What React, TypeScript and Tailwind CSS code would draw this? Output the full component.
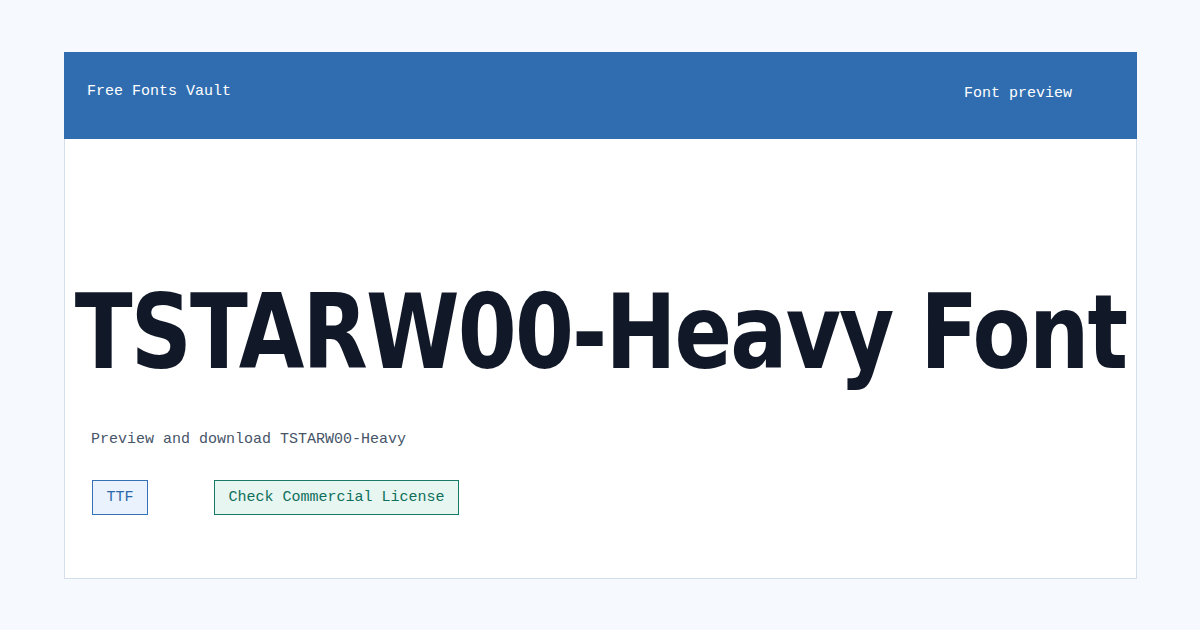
export default function App() {
  const mono = { fontFamily: '"Liberation Mono", "DejaVu Sans Mono", monospace' };
  return (
    <div className="w-[1200px] h-[630px] bg-[#f6f9fd] pt-[52px] pl-[64px] overflow-hidden">
      <div className="w-[1073px] h-[527px] bg-white border border-[#d5dfeb] flex flex-col">
        <header
          className="h-[87px] -mx-px -mt-px bg-[#306db0] flex items-start justify-between pl-[23px] pr-[65px] text-white text-[15px]"
          style={mono}
        >
          <span className="mt-[29px]">Free Fonts Vault</span>
          <span className="mt-[31px]">Font preview</span>
        </header>
        <div className="flex justify-center mt-[165px] h-[80px] items-end">
          <h1
            className="whitespace-nowrap text-[#111827] font-bold leading-none text-[103px] tracking-[-2px] scale-x-[0.915]"
            style={{ fontFamily: '"DejaVu Sans Condensed", "DejaVu Sans", sans-serif', fontStretch: 'condensed' }}
          >
            TSTARW00-Heavy Font
          </h1>
        </div>
        <p className="mt-[45px] ml-[26px] text-[15px] text-[#475569]" style={mono}>
          Preview and download TSTARW00-Heavy
        </p>
        <div className="flex gap-[66px] ml-[27px] mt-[28px] text-[15px]" style={mono}>
          <span className="h-[35px] w-[56px] pt-[2px] flex items-center justify-center bg-[#eaf2fd] border border-[#3571b3] text-[#2d69a9]">
            TTF
          </span>
          <span className="h-[35px] w-[245px] pt-[2px] flex items-center justify-center bg-[#e7f6f1] border border-[#167a66] text-[#0f6f5b]">
            Check Commercial License
          </span>
        </div>
      </div>
    </div>
  );
}
